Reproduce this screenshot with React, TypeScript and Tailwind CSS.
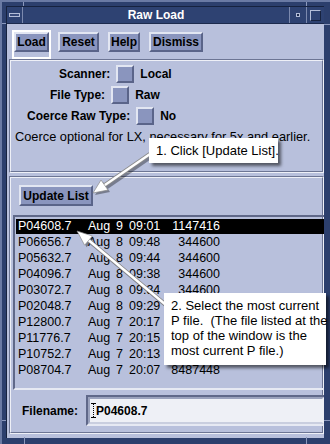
import React from "react";

const FILES = [
  { name: "P04608.7", day: "9", time: "09:01", size: "1147416" },
  { name: "P06656.7", day: "8", time: "09:48", size: "344600" },
  { name: "P05632.7", day: "8", time: "09:44", size: "344600" },
  { name: "P04096.7", day: "8", time: "09:38", size: "344600" },
  { name: "P03072.7", day: "8", time: "09:34", size: "344600" },
  { name: "P02048.7", day: "8", time: "09:29", size: "344600" },
  { name: "P12800.7", day: "7", time: "20:17", size: "8487448" },
  { name: "P11776.7", day: "7", time: "20:15", size: "8487448" },
  { name: "P10752.7", day: "7", time: "20:13", size: "8487448" },
  { name: "P08704.7", day: "7", time: "20:07", size: "8487448" },
];

const raised =
  "border-2 border-t-[#e2e6f2] border-l-[#e2e6f2] border-b-[#5a6489] border-r-[#5a6489] bg-[#8a95be]";

function MotifButton({ label, w, focus }: { label: string; w: string; focus?: boolean }) {
  return (
    <div className={focus ? "border-2 border-white" : "border-2 border-transparent"}>
      <div className={`${raised} ${w} h-[20px] flex items-center justify-center text-[12px] font-bold text-black`}>
        {label}
      </div>
    </div>
  );
}

function OptionRow({ label, value, ml }: { label: string; value: string; ml: string }) {
  return (
    <div className={`flex items-center h-[18px] ${ml}`}>
      <span className="text-[12px] font-bold">{label}</span>
      <div className={`${raised} w-[18px] h-[18px] mx-[6px]`} />
      <span className="text-[12px] font-bold">{value}</span>
    </div>
  );
}

// etched-in frame: dark outer line, light inner line
function Etched({ className, children }: { className: string; children: React.ReactNode }) {
  return (
    <div className={`border border-t-[#6c7594] border-l-[#6c7594] border-b-[#eef0f7] border-r-[#eef0f7] ${className}`}>
      <div className="h-full border border-t-[#eef0f7] border-l-[#eef0f7] border-b-[#6c7594] border-r-[#6c7594]">
        {children}
      </div>
    </div>
  );
}

export default function App() {
  return (
    <div className="relative w-[330px] h-[444px] overflow-hidden bg-[#2c3f6d] border-l-2 border-t-2 border-[#6a7aa4] font-['Liberation_Sans',Arial,sans-serif] text-black">
      <div className="ml-[4px] mt-[4px] w-[318px] h-[432px] border-l border-t border-[#16223f] flex flex-col overflow-hidden">
        {/* Title bar */}
        <div className="flex h-[17px] bg-[#2e4272] border-b border-[#1c2a4d]">
          <div className="w-[16px] flex items-center justify-center border-r border-[#7b89ae]">
            <div className="w-[11px] h-[4px] border border-[#b3bdd8] bg-[#3a4c7c]" />
          </div>
          <div className="flex-1 flex items-center justify-center text-white text-[12px] font-bold border-r border-[#7b89ae]">
            Raw Load
          </div>
          <div className="w-[17px] flex items-center justify-center border-r border-[#7b89ae]">
            <div className="w-[4px] h-[4px] border border-[#b3bdd8] bg-[#1c2a4d]" />
          </div>
          <div className="w-[17px] flex items-center justify-center">
            <div className="w-[11px] h-[11px] border border-t-[#b3bdd8] border-l-[#b3bdd8] border-b-[#16223f] border-r-[#16223f]" />
          </div>
        </div>

        {/* Client area */}
        <div className="flex-1 bg-[#b8c0dc] flex flex-col">
          <div className="flex gap-[5px] pl-[5px] pt-[6px] h-[35px]">
            <MotifButton label="Load" w="w-[35px]" focus />
            <MotifButton label="Reset" w="w-[41px]" />
            <MotifButton label="Help" w="w-[32px]" />
            <MotifButton label="Dismiss" w="w-[54px]" />
          </div>

          <Etched className="ml-[2px] h-[114px]">
            <div className="flex flex-col gap-[3px] pt-[4px]">
              <OptionRow label="Scanner:" value="Local" ml="ml-[48px]" />
              <OptionRow label="File Type:" value="Raw" ml="ml-[39px]" />
              <OptionRow label="Coerce Raw Type:" value="No" ml="ml-[16px]" />
            </div>
            <div className="ml-[4px] mt-[5px] text-[12.8px] leading-[14px] whitespace-nowrap">
              Coerce optional for LX, necessary for 5x and earlier.
            </div>
          </Etched>

          <Etched className="ml-[2px] mt-[3px] h-[258px]">
            <div className="flex flex-col">
              <div className="ml-[8px] mt-[7px]">
                <div className={`${raised} w-[74px] h-[21px] flex items-center justify-center text-[12px] font-bold`}>
                  Update List
                </div>
              </div>

              {/* file list */}
              <div className="ml-[2px] mr-[-4px] mt-[9px] h-[175px] border-2 border-t-[#5f6889] border-l-[#5f6889] border-b-[#e6e9f3] border-r-transparent pl-[1px] pt-[1px] overflow-hidden">
                {FILES.map((f, i) => (
                  <div
                    key={f.name}
                    className={`flex items-center h-[15px] my-[1px] pl-[2px] text-[12.5px] whitespace-nowrap ${
                      i === 0 ? "bg-black text-white" : "text-black"
                    }`}
                  >
                    <span className="w-[70px]">{f.name}</span>
                    <span className="w-[24px]">Aug</span>
                    <span className="w-[11px] text-right">{f.day}</span>
                    <span className="w-[46px] pl-[6px]">{f.time}</span>
                    <span className="w-[51px] text-right">{f.size}</span>
                  </div>
                ))}
              </div>

              {/* filename field */}
              <div className="flex items-center mt-[5px] h-[31px] mr-[-4px]">
                <span className="ml-[11px] text-[12px] font-bold">Filename:</span>
                <div className="ml-[8px] flex-1 h-[31px] border-2 border-t-[#5f6889] border-l-[#5f6889] border-b-[#e6e9f3] border-r-transparent">
                  <div className="h-full border-2 border-t-[#9aa2bd] border-l-[#9aa2bd] border-b-[#c9cedf] border-r-transparent bg-[#eef0f6] flex items-center pl-[1px]">
                    <svg width="5" height="15" viewBox="0 0 5 15">
                      <path d="M0 0.5h5M0 14.5h5" stroke="#000" strokeWidth="1" />
                      <path d="M2.5 1v13" stroke="#000" strokeWidth="1" strokeDasharray="1 1" />
                    </svg>
                    <span className="text-[12px] font-bold">P04608.7</span>
                  </div>
                </div>
              </div>
            </div>
          </Etched>
        </div>
      </div>

      {/* frame resize ticks */}
      <div className="absolute left-[21px] top-[-2px] w-[1px] h-[6px] bg-[#8b98bd]" />
      <div className="absolute left-[304px] top-[-2px] w-[1px] h-[6px] bg-[#8b98bd]" />
      <div className="absolute left-[-2px] top-[21px] w-[6px] h-[1px] bg-[#8b98bd]" />
      <div className="absolute left-[-2px] top-[418px] w-[6px] h-[1px] bg-[#8b98bd]" />
      <div className="absolute left-[322px] top-[22px] w-[6px] h-[1px] bg-[#8b98bd]" />
      <div className="absolute left-[322px] top-[418px] w-[6px] h-[1px] bg-[#8b98bd]" />
      <div className="absolute left-[22px] top-[435px] w-[1px] h-[7px] bg-[#8b98bd]" />
      <div className="absolute left-[304px] top-[435px] w-[1px] h-[7px] bg-[#8b98bd]" />

      {/* annotation arrows */}
      <svg className="absolute left-[-2px] top-[-2px] pointer-events-none" width="330" height="444" viewBox="0 0 330 444">
        <g opacity="0.35" transform="translate(2 2)">
          <line x1="150" y1="154" x2="102" y2="187" stroke="#000" strokeWidth="4" />
          <polygon points="93,193 108,190 101,180" fill="#000" />
          <line x1="166" y1="305" x2="86" y2="238" stroke="#000" strokeWidth="4" />
          <polygon points="77,231 84.6,245.2 92.4,236" fill="#000" />
        </g>
        <line x1="150" y1="154" x2="102" y2="187" stroke="#8a8a8a" strokeWidth="4" />
        <line x1="150" y1="154" x2="102" y2="187" stroke="#fff" strokeWidth="2.5" />
        <polygon points="93,193 108,190 101,180" fill="#fff" stroke="#8a8a8a" strokeWidth="0.7" />
        <line x1="166" y1="305" x2="86" y2="238" stroke="#8a8a8a" strokeWidth="4" />
        <line x1="166" y1="305" x2="86" y2="238" stroke="#fff" strokeWidth="2.5" />
        <polygon points="77,231 84.6,245.2 92.4,236" fill="#fff" stroke="#8a8a8a" strokeWidth="0.7" />
      </svg>

      {/* callouts */}
      <div className="absolute left-[147px] top-[136px] w-[129px] h-[25px] bg-white shadow-[3px_3px_3px_rgba(0,0,0,0.55)] flex items-center pl-[7px] text-[13px] whitespace-nowrap">
        1. Click [Update List].
      </div>
      <div className="absolute left-[162px] top-[291px] w-[162px] h-[72px] bg-white shadow-[3px_3px_3px_rgba(0,0,0,0.55)] pl-[7px] pt-[5px] text-[13px] leading-[15px] whitespace-nowrap">
        <div>2. Select the most current</div>
        <div>P file.&nbsp; (The file listed at the</div>
        <div>top of the window is the</div>
        <div>most current P file.)</div>
      </div>
    </div>
  );
}
